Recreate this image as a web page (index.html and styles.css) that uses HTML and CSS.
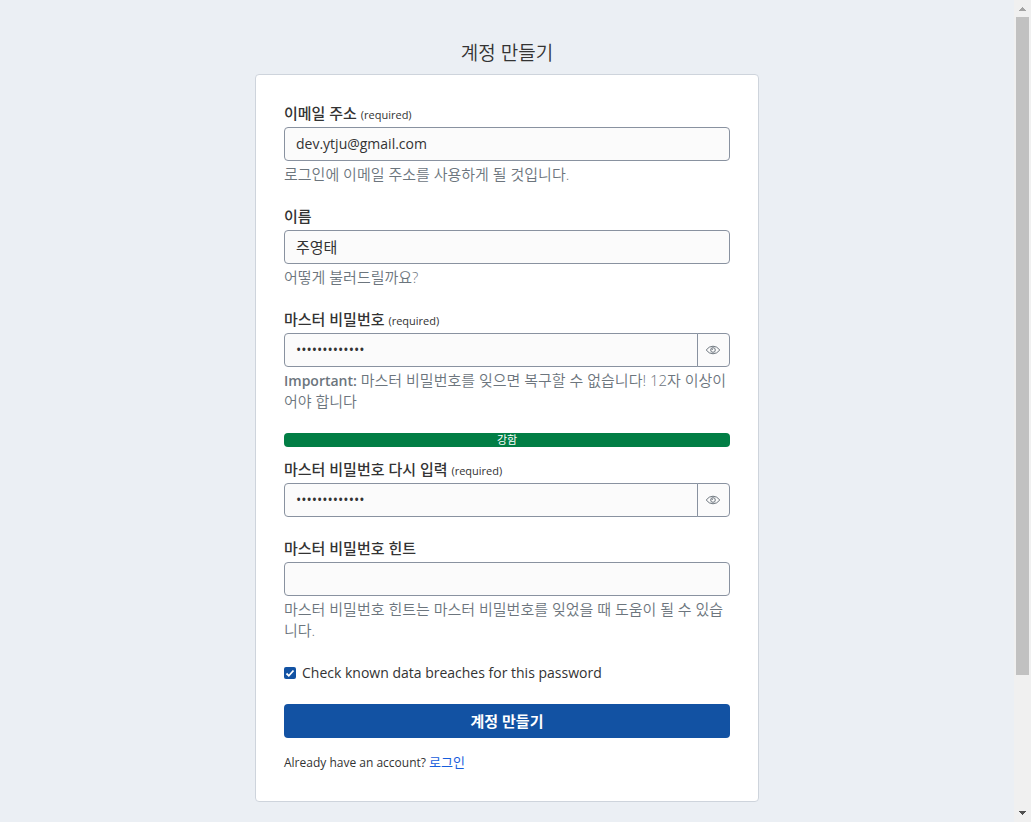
FILE: index.html
```html
<!DOCTYPE html>
<html lang="ko">
  <head>
    <meta charset="utf-8">
    <meta name="viewport" content="width=device-width, initial-scale=1">
    <title>계정 만들기</title>
    <link rel="stylesheet" href="styles.css">
  </head>
  <body>
    <main>
      <h1>계정 만들기</h1>
      <form class="card">
        <div class="form-group">
          <label for="email">이메일 주소 <small>(required)</small></label>
          <input class="form-control" id="email" type="email" value="dev.ytju@gmail.com">
          <p class="hint">로그인에 이메일 주소를 사용하게 될 것입니다.</p>
        </div>

        <div class="form-group">
          <label for="name">이름</label>
          <input class="form-control korean" id="name" type="text" value="주영태">
          <p class="hint">어떻게 불러드릴까요?</p>
        </div>

        <div class="form-group">
          <label for="password">마스터 비밀번호 <small>(required)</small></label>
          <div class="input-group">
            <input class="form-control" id="password" type="password" value="abcdefghijklm">
            <button type="button" class="toggle" aria-label="비밀번호 보기">
              <svg viewBox="0 0 16 12" width="16" height="12">
                <path d="M1.2 6Q4 2.2 8 2.2T14.8 6Q12 9.8 8 9.8T1.2 6Z" />
                <circle cx="8" cy="6" r="2.3" />
                <path d="M7 6A1 1 0 0 1 8 5" />
              </svg>
            </button>
          </div>
          <p class="hint"><strong>Important:</strong> 마스터 비밀번호를 잊으면 복구할 수 없습니다! 12자 이상이어야 합니다</p>
        </div>

        <div class="strength">강함</div>

        <div class="form-group">
          <label for="password2">마스터 비밀번호 다시 입력 <small>(required)</small></label>
          <div class="input-group">
            <input class="form-control" id="password2" type="password" value="abcdefghijklm">
            <button type="button" class="toggle" aria-label="비밀번호 보기">
              <svg viewBox="0 0 16 12" width="16" height="12">
                <path d="M1.2 6Q4 2.2 8 2.2T14.8 6Q12 9.8 8 9.8T1.2 6Z" />
                <circle cx="8" cy="6" r="2.3" />
                <path d="M7 6A1 1 0 0 1 8 5" />
              </svg>
            </button>
          </div>
        </div>

        <div class="form-group">
          <label for="hint">마스터 비밀번호 힌트</label>
          <input class="form-control" id="hint" type="text">
          <p class="hint">마스터 비밀번호 힌트는 마스터 비밀번호를 잊었을 때 도움이 될 수 있습니다.</p>
        </div>

        <div class="form-check">
          <input id="breaches" type="checkbox" checked>
          <label for="breaches">Check known data breaches for this password</label>
        </div>

        <button type="submit" class="submit">계정 만들기</button>
        <p class="login">Already have an account? <a href="#">로그인</a></p>
      </form>
    </main>

    <!-- scrollbar -->
    <div class="scrollbar" aria-hidden="true">
      <svg class="up" viewBox="0 0 7 4" width="7" height="4"><path d="M3 0h1v1h1v1h1v1h1v1H0V3h1V2h1V1h1z" /></svg>
      <div class="thumb"></div>
      <svg class="down" viewBox="0 0 7 4" width="7" height="4"><path d="M0 0h7v1H6v1H5v1H4v1H3V3H2V2H1V1H0z" /></svg>
    </div>
  </body>
</html>
```
FILE: styles.css
```css
:root {
  --bg: #ebeff4;
  --text: #333333;
  --muted: #6c757d;
  --border: #8992a0;
  --field: #fbfbfb;
  --primary: #1252a3;
}

* {
  margin: 0;
  padding: 0;
  box-sizing: border-box;
}

body {
  display: flex;
  min-height: 100vh;
  background: var(--bg);
  color: var(--text);
  font-family: "Open Sans", "Noto Sans CJK KR", sans-serif;
  font-size: 14px;
  line-height: 21px;
}

main {
  flex: 1;
  padding: 42px 20px 20px;
}

h1 {
  margin-bottom: 10px;
  text-align: center;
  font-size: 19px;
  font-weight: 350;
  line-height: 22px;
}

.card {
  max-width: 504px;
  margin: 0 auto;
  padding: 28px;
  background: #fff;
  border: 1px solid #ced4dc;
  border-radius: 4px;
}

.form-group {
  margin-bottom: 21px;

  label {
    display: block;
    height: 21px;
    margin-bottom: 3px;
    font-size: 15px;
    font-weight: 500;
    line-height: 20px;
  }

  small {
    font-size: 11px;
    font-weight: 400;
  }
}

.form-control {
  display: block;
  width: 100%;
  height: 34px;
  padding: 0 11px 1px;
  background: var(--field);
  color: var(--text);
  border: 1px solid var(--border);
  border-radius: 4px;
  font: inherit;

  &.korean {
    font-size: 15px;
  }
}

.input-group {
  display: flex;

  .form-control {
    flex: 1;
    border-radius: 4px 0 0 4px;
  }
}

.toggle {
  display: flex;
  align-items: center;
  justify-content: center;
  width: 33px;
  margin-left: -1px;
  padding-right: 1px;
  background: var(--field);
  border: 1px solid var(--border);
  border-radius: 0 4px 4px 0;

  svg {
    fill: none;
    stroke: var(--muted);
  }
}

.hint {
  margin-top: 3px;
  color: var(--muted);
  font-size: 15px;
  font-weight: 350;

  strong {
    font-size: 14px;
    font-weight: 600;
  }
}

.strength {
  height: 14px;
  margin-bottom: 12px;
  background: #017e45;
  border-radius: 4px;
  color: #fff;
  font-size: 11px;
  line-height: 14px;
  text-align: center;
}

.form-check {
  display: flex;
  align-items: center;
  gap: 6px;
  margin-bottom: 21px;

  input {
    appearance: none;
    width: 12px;
    height: 12px;
    border-radius: 2px;
    background: var(--primary) url("data:image/svg+xml,%3Csvg xmlns='http://www.w3.org/2000/svg' viewBox='0 0 12 12'%3E%3Cpath d='M2.5 6.5L4.8 8.8L9.5 3.5' fill='none' stroke='white' stroke-width='1.8'/%3E%3C/svg%3E");
  }
}

.submit {
  display: block;
  width: 100%;
  height: 34px;
  margin-bottom: 14px;
  background: var(--primary);
  color: #fff;
  border: 0;
  border-radius: 4px;
  font: inherit;
  font-size: 15px;
  font-weight: 700;
}

.login {
  font-size: 12px;

  a {
    color: #175ddc;
    font-size: 13px;
    text-decoration: none;
  }
}

.scrollbar {
  position: sticky;
  top: 0;
  display: flex;
  flex-direction: column;
  align-items: center;
  width: 17px;
  height: 100vh;
  padding: 7px 2px;
  background: #f0f0f0;

  .up {
    fill: #a3a3a3;
  }

  .thumb {
    width: 13px;
    height: 80vh;
    margin-top: 6px;
    background: #c1c1c1;
  }

  .down {
    margin-top: auto;
    fill: #505050;
  }
}
```
